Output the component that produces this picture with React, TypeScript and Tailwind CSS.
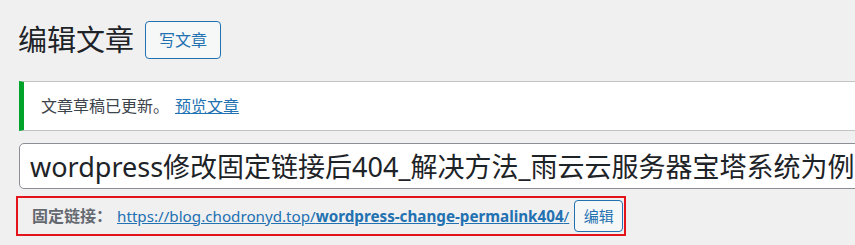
export default function App() {
  const font = { fontFamily: '"Noto Sans", "Noto Sans CJK SC", sans-serif' };

  return (
    <div
      className="w-[855px] h-[245px] overflow-hidden bg-[#f0f0f1] text-[#1d2327]"
      style={font}
    >
      {/* header */}
      <div className="flex items-center pl-[18px] pt-[21px]">
        <h1 className="text-[29px] leading-[38px] font-normal text-[#1d2327]">编辑文章</h1>
        <button className="ml-[11px] h-[38px] w-[76px] rounded-[4px] border border-[#2271b1] bg-[#f6f7f7] text-[16px] text-[#2271b1]">
          写文章
        </button>
      </div>

      {/* notice */}
      <div className="ml-[19px] mt-[22px] flex h-[50px] w-[900px] shrink-0 items-center border-y border-r border-[#c3c4c7] border-l-[5px] border-l-[#00a32a] bg-white pl-[17px] text-[16px]">
        <span className="text-[#3c434a]">文章草稿已更新。</span>
        <a href="#" className="ml-[6px] text-[#2271b1] underline">
          预览文章
        </a>
      </div>

      {/* title input */}
      <div className="ml-[19px] mt-[12px] flex h-[46px] w-[900px] items-center overflow-hidden rounded-[5px] border border-[#8c8f94] bg-white pl-[10px]">
        <span className="whitespace-nowrap text-[27px] leading-none text-[#1d2327]">
          wordpress修改固定链接后404_解决方法_雨云云服务器宝塔系统为例
        </span>
      </div>

      {/* permalink */}
      <div className="ml-[16px] mt-[7px] flex h-[40px] w-[610px] items-center border-2 border-[#e3151a] pl-[14px] text-[16px]">
        <span className="shrink-0 whitespace-nowrap font-bold text-[#646970]">固定链接：</span>
        <a href="#" className="ml-[5px] shrink-0 whitespace-nowrap text-[15.2px] text-[#2271b1] underline">
          https://blog.chodronyd.top/<span className="font-bold">wordpress-change-permalink404</span>/
        </a>
        <button className="ml-[5px] h-[32px] w-[49px] shrink-0 rounded-[4px] border border-[#2271b1] bg-[#f6f7f7] text-[15px] text-[#2271b1]">
          编辑
        </button>
      </div>
    </div>
  );
}
